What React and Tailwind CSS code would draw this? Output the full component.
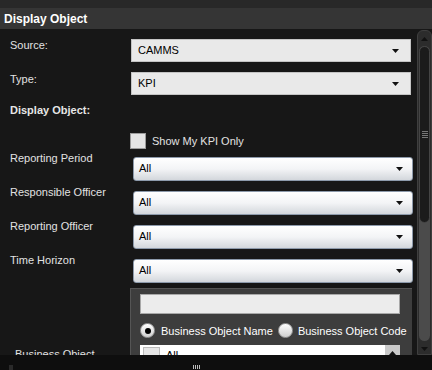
import React from "react";

const Arrow = ({ className = "" }) => (
  <svg width="7" height="4" viewBox="0 0 7 4" className={className}>
    <path d="M0 0h7L3.5 4z" fill="#111" />
  </svg>
);

const FlatSelect = ({ value }) => (
  <div className="flex h-[23px] w-[280px] items-center justify-between border border-[#c4c4c4] bg-[#e9e9e9] pl-[6px] pr-[11px] text-[11px] text-black">
    <span>{value}</span>
    <Arrow />
  </div>
);

const GradSelect = ({ value }) => (
  <div className="ml-[2px] flex h-[24px] w-[280px] items-center justify-between rounded-[3px] border border-[#8d9aab] bg-gradient-to-b from-white via-[#f3f4f6] to-[#d3d7dc] pl-[5px] pr-[9px] text-[11px] text-black">
    <span>{value}</span>
    <Arrow />
  </div>
);

const Radio = ({ checked }) => (
  <span className="flex h-[15px] w-[15px] shrink-0 items-center justify-center rounded-full border border-[#9a9a9a] bg-gradient-to-b from-white to-[#cfcfcf]">
    {checked && <span className="h-[6px] w-[6px] rounded-full bg-black" />}
  </span>
);

const FilterRow = ({ label, value }) => (
  <div className="mt-[5px] flex items-start">
    <div className="w-[131px] pl-[10px] text-[11px] leading-[13px] text-[#e2e2e2]">{label}</div>
    <div className="mt-[5px]">
      <GradSelect value={value} />
    </div>
  </div>
);

export default function App() {
  return (
    <div className="flex h-[370px] w-[432px] flex-col overflow-hidden bg-[#171717] font-['Liberation_Sans',Arial,sans-serif]">
      <div className="h-[8px] bg-[#282828]" />
      <div className="flex h-[21px] items-center bg-[#353535] pl-[4px] text-[12px] font-bold text-white">
        Display Object
      </div>

      <div className="flex h-[326px]">
        <div className="w-[417px] overflow-hidden">
          <div className="mt-[10px] flex items-start">
            <div className="w-[131px] pl-[10px] text-[11px] leading-[13px] text-[#e2e2e2]">Source:</div>
            <FlatSelect value="CAMMS" />
          </div>
          <div className="mt-[10px] flex items-start">
            <div className="w-[131px] pl-[10px] pt-[1px] text-[11px] leading-[13px] text-[#e2e2e2]">Type:</div>
            <FlatSelect value="KPI" />
          </div>
          <div className="mt-[9px] pl-[10px] text-[11px] font-bold leading-[13px] text-[#e6e6e6]">Display Object:</div>

          <div className="mt-[16px] flex items-center pl-[130px]">
            <span className="h-[16px] w-[16px] border border-[#9c9c9c] bg-[#e4e4e4]" />
            <span className="ml-[6px] text-[11px] text-[#e2e2e2]">Show My KPI Only</span>
          </div>

          <div className="mt-[-3px]">
            <FilterRow label="Reporting Period" value="All" />
            <FilterRow label="Responsible Officer" value="All" />
            <FilterRow label="Reporting Officer" value="All" />
            <FilterRow label="Time Horizon" value="All" />
          </div>

          <div className="mt-[5px] flex items-start">
            <div className="mt-[60px] w-[130px] whitespace-nowrap pl-[15px] text-[11px] leading-[13px] text-[#e2e2e2]">Business Object</div>
            <div className="h-[120px] w-[282px] border-l border-t border-[#555] bg-[#3d3d3d] pl-[9px] pr-[12px] pt-[5px]">
              <div className="h-[20px] w-[260px] border border-[#a8a8a8] bg-[#ececec]" />
              <div className="mt-[9px] flex w-max items-center whitespace-nowrap text-[11px] text-white">
                <Radio checked />
                <span className="ml-[6px]">Business Object Name</span>
                <span className="ml-[5px]"><Radio /></span>
                <span className="ml-[5px]">Business Object Code</span>
              </div>
              <div className="mt-[6px] flex h-[70px] w-[260px] bg-white">
                <div className="flex flex-1 items-start pl-[3px] pt-[2px]">
                  <span className="h-[17px] w-[17px] border border-[#bbb] bg-[#e6e6e6]" />
                  <span className="ml-[6px] text-[11px] leading-[17px] text-black">All</span>
                </div>
                <div className="flex w-[15px] justify-center bg-[#c9c9c9] pt-[6px]">
                  <svg width="7" height="4" viewBox="0 0 7 4">
                    <path d="M0 4h7L3.5 0z" fill="#111" />
                  </svg>
                </div>
              </div>
            </div>
          </div>
        </div>

        <div className="mt-[1px] flex w-[15px] flex-col items-center rounded-t-[6px] border border-[#3f3f3f] bg-[#2c2c2c]">
          <svg width="7" height="4" viewBox="0 0 7 4" className="mt-[6px]">
            <path d="M0 4h7L3.5 0z" fill="#111" />
          </svg>
          <div className="mt-[5px] flex w-[11px] flex-1 flex-col rounded-full bg-[#4b4b4b]">
            <div className="flex h-[177px] flex-col items-center justify-center gap-[1px] rounded-full border border-[#454545] bg-[#1b1b1b]">
              <span className="h-px w-[6px] bg-[#777]" />
              <span className="h-px w-[6px] bg-[#777]" />
              <span className="h-px w-[6px] bg-[#777]" />
              <span className="h-px w-[6px] bg-[#777]" />
            </div>
          </div>
          <svg width="7" height="4" viewBox="0 0 7 4" className="mb-[3px] mt-[6px]">
            <path d="M0 0h7L3.5 4z" fill="#111" />
          </svg>
        </div>
      </div>

      <div className="relative flex h-[15px] items-end bg-[#0e0e0e]">
        <span className="absolute bottom-0 left-[9px] h-[5px] w-[4px] bg-[#2a2a2a]" />
        <div className="ml-[193px] flex gap-[1px] pb-[1px]">
          <span className="h-[4px] w-px bg-[#bbb]" />
          <span className="h-[4px] w-px bg-[#bbb]" />
          <span className="h-[4px] w-px bg-[#bbb]" />
          <span className="h-[4px] w-px bg-[#bbb]" />
        </div>
      </div>
    </div>
  );
}
